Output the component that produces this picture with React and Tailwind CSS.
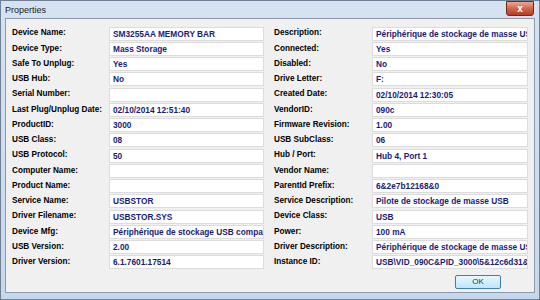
const left = [
  ['Device Name:', 'SM3255AA MEMORY BAR'],
  ['Device Type:', 'Mass Storage'],
  ['Safe To Unplug:', 'Yes'],
  ['USB Hub:', 'No'],
  ['Serial Number:', ''],
  ['Last Plug/Unplug Date:', '02/10/2014 12:51:40'],
  ['ProductID:', '3000'],
  ['USB Class:', '08'],
  ['USB Protocol:', '50'],
  ['Computer Name:', ''],
  ['Product Name:', ''],
  ['Service Name:', 'USBSTOR'],
  ['Driver Filename:', 'USBSTOR.SYS'],
  ['Device Mfg:', 'Périphérique de stockage USB compatible'],
  ['USB Version:', '2.00'],
  ['Driver Version:', '6.1.7601.17514'],
]

const right = [
  ['Description:', 'Périphérique de stockage de masse USB'],
  ['Connected:', 'Yes'],
  ['Disabled:', 'No'],
  ['Drive Letter:', 'F:'],
  ['Created Date:', '02/10/2014 12:30:05'],
  ['VendorID:', '090c'],
  ['Firmware Revision:', '1.00'],
  ['USB SubClass:', '06'],
  ['Hub / Port:', 'Hub 4, Port 1'],
  ['Vendor Name:', ''],
  ['ParentId Prefix:', '6&2e7b12168&0'],
  ['Service Description:', 'Pilote de stockage de masse USB'],
  ['Device Class:', 'USB'],
  ['Power:', '100 mA'],
  ['Driver Description:', 'Périphérique de stockage de masse USB'],
  ['Instance ID:', 'USB\\VID_090C&PID_3000\\5&12c6d31&0&1'],
]

function Column({ rows, labelWidth, boxWidth }) {
  return (
    <div className="flex flex-col">
      {rows.map(([label, value]) => (
        <div key={label} className="flex h-[15.25px] items-center">
          <div className="shrink-0 text-[8.2px] text-black" style={{ width: labelWidth }}>{label}</div>
          <div
            className="h-[14px] shrink-0 overflow-hidden whitespace-nowrap border border-[#dcdcdc] bg-white pl-[3px] leading-[12px] text-[#1a1a7a]"
            style={{ width: boxWidth }}
          >
            {value}
          </div>
        </div>
      ))}
    </div>
  )
}

export default function App() {
  return (
    <div className="flex h-[300px] w-[540px] flex-col border border-[#6f7f94] bg-gradient-to-b from-[#d6e2f0] to-[#c8d8ec] font-['Liberation_Sans',Arial,sans-serif]">
      <div className="flex h-[17px] shrink-0 items-start justify-between">
        <div className="pl-[4px] pt-[3px] text-[9px] text-[#1a1a1a]">Properties</div>
        <div className="mr-[5px] flex h-[15px] w-[28px] items-center justify-center rounded-b-[3px] border border-[#6e2a1f] bg-gradient-to-b from-[#e9a996] via-[#d2654b] to-[#b83a22] text-[10px] font-bold leading-none text-white">
          x
        </div>
      </div>
      <div className="mx-[4px] flex flex-1 flex-col border border-[#8a9bb0] bg-[#f0f0f0] pl-[6px] pt-[7px] text-[8.3px] font-bold">
        <div className="flex">
          <Column rows={left} labelWidth={97} boxWidth={155} />
          <div className="w-[10px]" />
          <Column rows={right} labelWidth={98} boxWidth={156} />
        </div>
        <div className="mt-[5px] flex justify-end pr-[33px]">
          <div className="flex h-[14px] w-[46px] items-center justify-center rounded-[2px] border border-[#3c7fb1] bg-gradient-to-b from-[#eaf6fd] to-[#bee6fd] text-[8px] font-normal text-[#333]">
            OK
          </div>
        </div>
      </div>
      <div className="h-[6px] shrink-0" />
    </div>
  )
}
